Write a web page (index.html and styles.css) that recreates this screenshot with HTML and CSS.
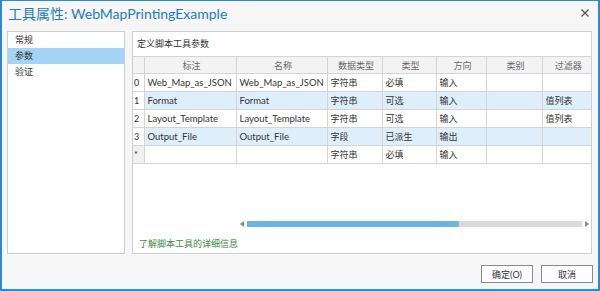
FILE: index.html
```html
<!DOCTYPE html>
<html lang="zh-CN">
<head>
<meta charset="UTF-8">
<title>工具属性: WebMapPrintingExample</title>
<link rel="stylesheet" href="styles.css">
</head>
<body>
  <div class="dialog">
    <div class="title-bar">
      <h1 class="title">工具属性: WebMapPrintingExample</h1>
      <svg class="close-btn" width="8" height="8" viewBox="0 0 8 8">
        <path d="M0.5 0.5 L7.5 7.5 M7.5 0.5 L0.5 7.5" stroke="#555" stroke-width="1.3" fill="none"/>
      </svg>
    </div>

    <div class="dialog-body">
      <ul class="side-nav">
        <li>常规</li>
        <li class="active">参数</li>
        <li>验证</li>
      </ul>

      <div class="main-panel">
        <div class="panel-heading">定义脚本工具参数</div>
        <table class="param-table">
          <thead>
            <tr>
              <th class="idx"></th>
              <th class="c-label">标注</th>
              <th class="c-name">名称</th>
              <th class="c-dtype">数据类型</th>
              <th class="c-type">类型</th>
              <th class="c-dir">方向</th>
              <th class="c-cat">类别</th>
              <th class="c-filter">过滤器</th>
            </tr>
          </thead>
          <tbody>
            <tr>
              <td class="idx">0</td><td class="en">Web_Map_as_JSON</td><td class="en">Web_Map_as_JSON</td><td>字符串</td><td>必填</td><td>输入</td><td></td><td></td>
            </tr>
            <tr class="alt">
              <td class="idx">1</td><td class="en">Format</td><td class="en">Format</td><td>字符串</td><td>可选</td><td>输入</td><td></td><td>值列表</td>
            </tr>
            <tr>
              <td class="idx">2</td><td class="en">Layout_Template</td><td class="en">Layout_Template</td><td>字符串</td><td>可选</td><td>输入</td><td></td><td>值列表</td>
            </tr>
            <tr class="alt">
              <td class="idx">3</td><td class="en">Output_File</td><td class="en">Output_File</td><td>字段</td><td>已派生</td><td>输出</td><td></td><td></td>
            </tr>
            <tr class="new-row">
              <td class="idx">*</td><td></td><td></td><td>字符串</td><td>必填</td><td>输入</td><td></td><td></td>
            </tr>
          </tbody>
        </table>

        <div class="hscroll">
          <span class="arrow left"></span>
          <div class="track"><div class="thumb"></div></div>
          <span class="arrow right"></span>
        </div>

        <a class="help-link" href="#">了解脚本工具的详细信息</a>
      </div>
    </div>

    <div class="dialog-footer">
      <button class="btn">确定(O)</button>
      <button class="btn">取消</button>
    </div>
  </div>
</body>
</html>
```

FILE: styles.css
```css
* {
  box-sizing: border-box;
}

body {
  margin: 0;
  font-family: Lato, "Noto Sans CJK SC", sans-serif;
  font-size: 9px;
  color: #333;
}

.dialog {
  width: 600px;
  height: 291px;
  background: #f5f6f5;
  border: 2px solid #2a8ad4;
  border-top-width: 1px;
  display: flex;
  flex-direction: column;
}

.title-bar {
  height: 30px;
  display: flex;
  align-items: center;
  justify-content: space-between;
  padding: 0 9px 0 6px;
}

.title {
  margin: 0;
  font-size: 14px;
  font-weight: normal;
  color: #1c7cc6;
  margin-top: -6px;
}

.close-btn {
  margin-top: -7px;
}

.dialog-body {
  display: flex;
  gap: 7px;
  padding: 0 6px 0 5px;
  height: 223px;
}

.side-nav {
  list-style: none;
  margin: 0;
  padding: 0;
  width: 118px;
  background: #fff;
  border: 1px solid #cfcfcf;
}

.side-nav li {
  padding: 0 0 0 7px;
  height: 16px;
  line-height: 16px;
}

.side-nav li.active {
  background: #a3d4f3;
}

.main-panel {
  flex: 1;
  background: #fff;
  border: 1px solid #cfcfcf;
  display: flex;
  flex-direction: column;
}

.panel-heading {
  height: 24px;
  line-height: 24px;
  padding-left: 4px;
}

.param-table {
  border-collapse: collapse;
  width: 100%;
  table-layout: fixed;
}

.param-table th,
.param-table td {
  border: 1px solid #d4d4d4;
  height: 18px;
  padding: 0 0 0 3px;
  white-space: nowrap;
  overflow: hidden;
  text-align: left;
  font-weight: normal;
}

.param-table td.en {
  font-size: 9.5px;
}

.param-table th {
  text-align: center;
  background: #f3f3f3;
  color: #666;
  height: 17px;
}

.param-table tr > :first-child {
  border-left: none;
}

.param-table tr > :last-child {
  border-right: none;
}

.param-table .idx {
  width: 11px;
  padding-left: 1px;
}

.c-label { width: 92px; }
.c-name { width: 91px; }
.c-dtype { width: 55px; }
.c-type { width: 54px; }
.c-dir { width: 50px; }
.c-cat { width: 56px; }

.param-table tr.alt td {
  background: #deeefa;
}

.param-table tr.alt td.idx {
  background: #fff;
}

.param-table tr.new-row td.idx {
  background: #f0f0f0;
}

.hscroll {
  display: flex;
  align-items: center;
  margin: 56px 2px 0 107px;
  height: 7px;
}

.arrow {
  width: 0;
  height: 0;
  border-top: 3px solid transparent;
  border-bottom: 3px solid transparent;
}

.arrow.left {
  border-right: 4px solid #888;
  margin-right: 3px;
}

.arrow.right {
  border-left: 4px solid #888;
  margin-left: 3px;
}

.track {
  flex: 1;
  height: 6px;
  background: #dcdcdc;
}

.thumb {
  width: 212px;
  height: 100%;
  background: #6db5e5;
}

.help-link {
  margin: 10px 0 0 6px;
  color: #3d8a3d;
  text-decoration: none;
}

.dialog-footer {
  display: flex;
  justify-content: flex-end;
  gap: 8px;
  padding: 11px 5px 0 0;
}

.btn {
  width: 52px;
  height: 18px;
  padding: 0;
  font-family: inherit;
  font-size: 9px;
  color: #333;
  background: #fdfdfd;
  border: 1px solid #8a8a8a;
}
```
